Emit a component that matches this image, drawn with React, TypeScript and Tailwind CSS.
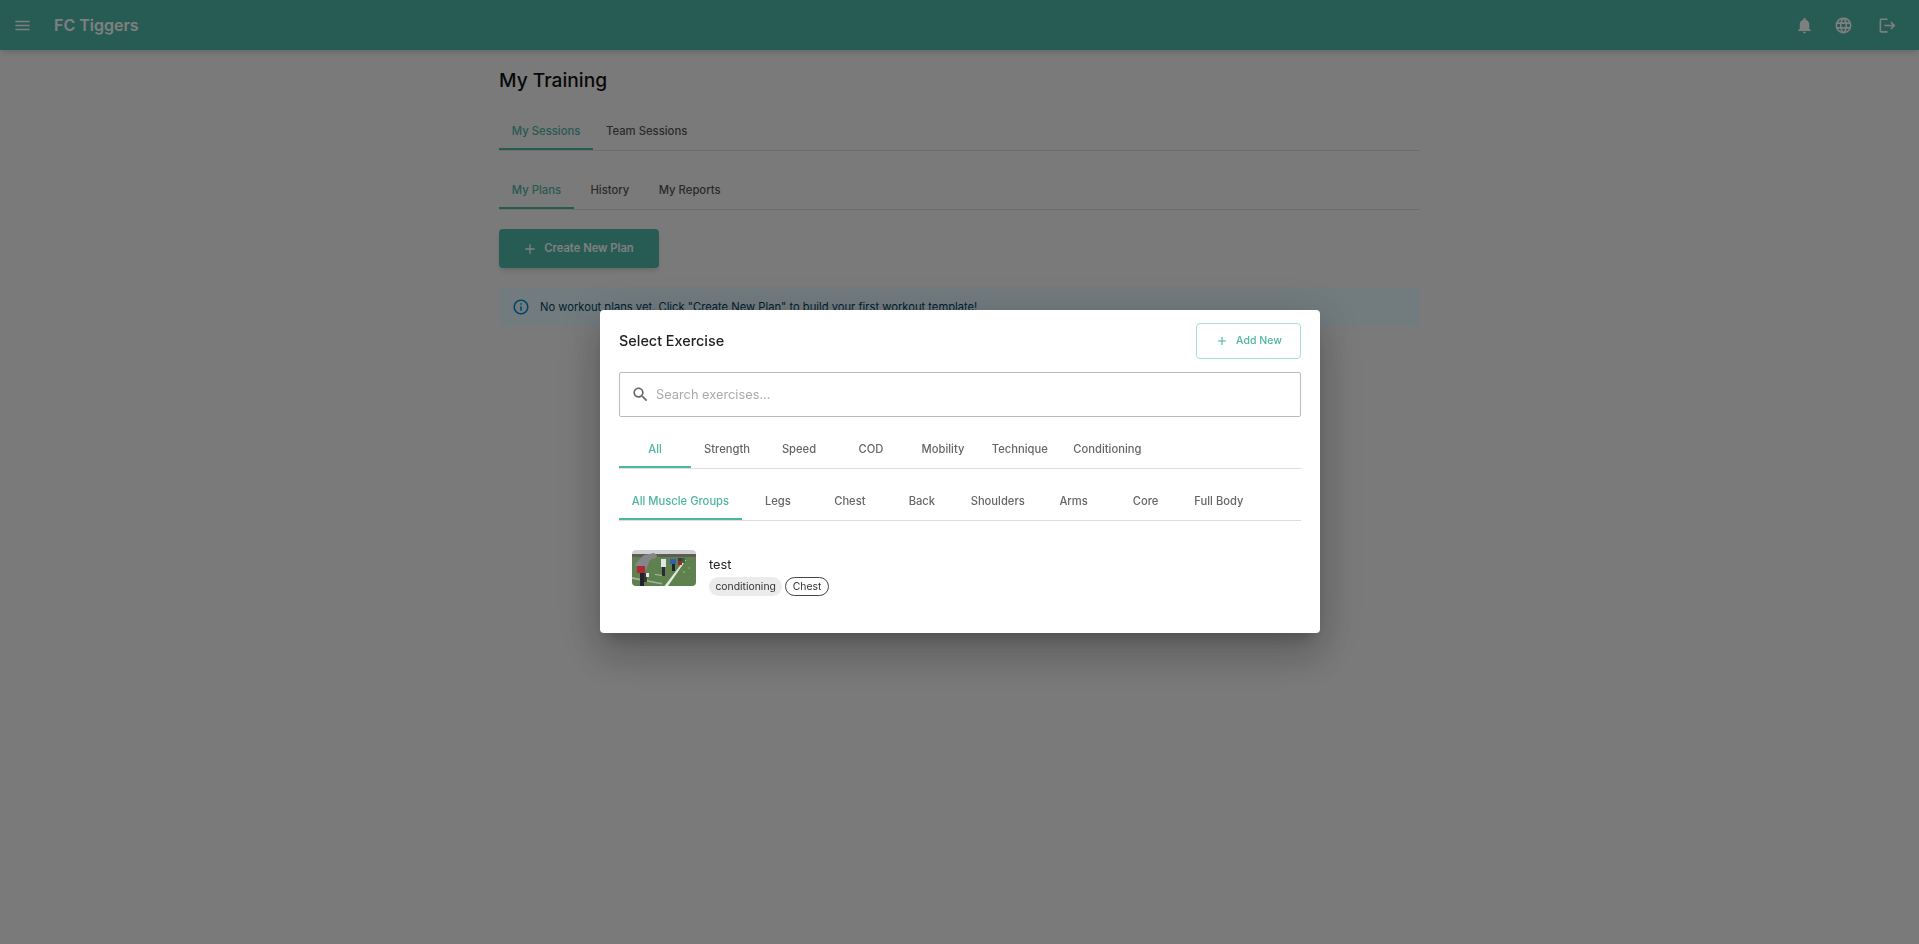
const P = {
  menu: "M3 18h18v-2H3v2zm0-5h18v-2H3v2zm0-7v2h18V6H3z",
  bell: "M12 22c1.1 0 2-.9 2-2h-4c0 1.1.89 2 2 2zm6-6v-5c0-3.07-1.64-5.64-4.5-6.32V4c0-.83-.67-1.5-1.5-1.5s-1.5.67-1.5 1.5v.68C7.63 5.36 6 7.92 6 11v5l-2 2v1h16v-1l-2-2z",
  globe:
    "M11.99 2C6.47 2 2 6.48 2 12s4.47 10 9.99 10C17.52 22 22 17.52 22 12S17.52 2 11.99 2zm6.93 6h-2.95c-.32-1.25-.78-2.45-1.38-3.56 1.84.63 3.37 1.91 4.33 3.56zM12 4.04c.83 1.2 1.48 2.53 1.91 3.96h-3.82c.43-1.43 1.08-2.76 1.91-3.96zM4.26 14C4.1 13.36 4 12.69 4 12s.1-1.36.26-2h3.38c-.08.66-.14 1.32-.14 2 0 .68.06 1.34.14 2H4.26zm.82 2h2.95c.32 1.25.78 2.45 1.38 3.56-1.84-.63-3.37-1.9-4.33-3.56zm2.95-8H5.08c.96-1.66 2.49-2.93 4.33-3.56C8.81 5.55 8.35 6.75 8.03 8zM12 19.96c-.83-1.2-1.48-2.53-1.91-3.96h3.82c-.43 1.43-1.08 2.76-1.91 3.96zM14.34 14H9.66c-.09-.66-.16-1.32-.16-2 0-.68.07-1.35.16-2h4.68c.09.65.16 1.32.16 2 0 .68-.07 1.34-.16 2zm.25 5.56c.6-1.11 1.06-2.31 1.38-3.56h2.95c-.96 1.65-2.49 2.93-4.33 3.56zM16.36 14c.08-.66.14-1.32.14-2 0-.68-.06-1.34-.14-2h3.38c.16.64.26 1.31.26 2s-.1 1.36-.26 2h-3.38z",
  logout:
    "M17 7l-1.41 1.41L18.17 11H8v2h10.17l-2.58 2.58L17 17l5-5zM4 5h8V3H4c-1.1 0-2 .9-2 2v14c0 1.1.9 2 2 2h8v-2H4V5z",
  search:
    "M15.5 14h-.79l-.28-.27C15.41 12.59 16 11.11 16 9.5 16 5.91 13.09 3 9.5 3S3 5.91 3 9.5 5.91 16 9.5 16c1.61 0 3.09-.59 4.23-1.57l.27.28v.79l5 4.99L20.49 19l-4.99-5zm-6 0C7.01 14 5 11.99 5 9.5S7.01 5 9.5 5 14 7.01 14 9.5 11.99 14 9.5 14z",
  add: "M19 13h-6v6h-2v-6H5v-2h6V5h2v6h6v2z",
  info: "M11 7h2v2h-2zm0 4h2v6h-2zm1-9C6.48 2 2 6.48 2 12s4.48 10 10 10 10-4.48 10-10S17.52 2 12 2zm0 18c-4.41 0-8-3.59-8-8s3.59-8 8-8 8 3.59 8 8-3.59 8-8 8z",
};

function Icon({ d, className }: { d: string; className: string }) {
  return (
    <svg viewBox="0 0 24 24" fill="currentColor" className={className}>
      <path d={d} />
    </svg>
  );
}

// small photo of players on a pitch
function Thumb() {
  return (
    <svg viewBox="0 0 64 36" className="w-16 h-9 rounded-[4px] shrink-0">
      <defs>
        <filter id="soft">
          <feGaussianBlur stdDeviation="0.5" />
        </filter>
      </defs>
      <g filter="url(#soft)">
        <rect x="-2" y="-2" width="68" height="40" fill="#5f8050" />
        <rect x="-2" y="-2" width="68" height="6" fill="#cfd2d5" />
        <rect x="-2" y="4" width="68" height="3" fill="#5f5c55" />
        <path d="M54 10 L36 36 L32.5 36 L52.5 10z" fill="#e6ebe0" />
        <path d="M0 27 L30 33 L30 34.5 L0 29z" fill="#cdd5c5" opacity=".6" />
        <path d="M23 24 L31 25 L31 26 L23 25z" fill="#d6dccd" opacity=".7" />
        <circle cx="15" cy="30" r=".8" fill="#c9b83a" />
        <circle cx="52" cy="22" r=".8" fill="#c9b83a" />
        <circle cx="57" cy="18" r=".7" fill="#c9b83a" />
        <path d="M3 14 L12 5 L22 3 L25 7 L18 10 L14 20 L6 19z" fill="#85868a" />
        <circle cx="22" cy="6" r="2.6" fill="#8b8478" />
        <rect x="5" y="16" width="8" height="7" fill="#ad2a30" />
        <rect x="8" y="23" width="4" height="13" fill="#24242a" />
        <rect x="12" y="23" width="3" height="9" fill="#35353a" />
        <rect x="14" y="23" width="3" height="4" fill="#e8e8e8" />
        <rect x="29" y="9" width="5" height="8" fill="#e2e5e8" />
        <rect x="30" y="17" width="3" height="9" fill="#2a2a30" />
        <rect x="38" y="9" width="6" height="5" fill="#2e62ad" />
        <rect x="40" y="14" width="3" height="7" fill="#22242a" />
        <rect x="46" y="8" width="4" height="3" fill="#3d3d3d" />
        <rect x="46" y="11" width="4" height="4" fill="#9c2b2b" />
        <rect x="50" y="8" width="3" height="5" fill="#2d6a3a" />
      </g>
    </svg>
  );
}

function Tab({ label, active }: { label: string; active?: boolean }) {
  return (
    <div
      className={`h-[38px] min-w-[72px] px-[12.8px] pt-[3px] flex items-center justify-center text-[11.2px] font-medium border-b-2 ${
        active ? "text-[#4db6a2] border-[#4db6a2]" : "text-[#666] border-transparent"
      }`}
    >
      {label}
    </div>
  );
}

function PageTab({ label, active }: { label: string; active?: boolean }) {
  return (
    <div
      className={`h-[38px] min-w-[72px] px-[12.8px] pt-[2px] flex items-center justify-center text-[11.3px] font-medium border-b-2 ${
        active ? "text-[#4db6a2] border-[#4db6a2]" : "text-[#555] border-transparent"
      }`}
    >
      {label}
    </div>
  );
}

export default function App() {
  return (
    <div className="min-h-[944px] bg-[#f5f5f5] font-['Inter',sans-serif]">
      <header className="h-[50px] bg-[#4fb8a8] text-white flex items-center pl-[13px] shadow-md">
        <Icon d={P.menu} className="w-[19px] h-[19px]" />
        <span className="ml-[22px] text-[16px] font-semibold">FC Tiggers</span>
        <div className="ml-auto flex items-center">
          <Icon d={P.bell} className="w-[19px] h-[19px] mr-[20px]" />
          <Icon d={P.globe} className="w-[19px] h-[19px] mr-[25px]" />
          <Icon d={P.logout} className="w-[19px] h-[19px] mr-[22px]" />
        </div>
      </header>

      <main className="w-[921px] mx-auto">
        <h1 className="mt-[18px] text-[19.2px] leading-[24px] font-medium text-[#111]">My Training</h1>
        <div className="mt-[20px] flex border-b border-[#ddd]">
          <PageTab label="My Sessions" active />
          <PageTab label="Team Sessions" />
        </div>
        <div className="mt-[20px] flex border-b border-[#ddd]">
          <PageTab label="My Plans" active />
          <PageTab label="History" />
          <PageTab label="My Reports" />
        </div>
        <button className="mt-[19px] h-[39px] w-[160px] rounded-[4px] bg-[#4fb8a8] text-white text-[11.2px] font-semibold flex items-center justify-center gap-[6px] pr-[2px] shadow-md">
          <Icon d={P.add} className="w-[16px] h-[16px]" />
          Create New Plan
        </button>
        <div className="mt-[19px] h-[39px] rounded-[4px] bg-[#e5f6fd] flex items-center px-[13px] text-[11.2px] text-[#014361]">
          <Icon d={P.info} className="w-[18px] h-[18px] text-[#0288d1] mr-[10px]" />
          <span className="pt-[2px]">No workout plans yet. Click "Create New Plan" to build your first workout template!</span>
        </div>
      </main>

      {/* dialog */}
      <div className="fixed inset-0 bg-black/50 pb-[1px] flex items-center justify-center">
        <div className="w-[720px] h-[323px] bg-white rounded-[4px] pl-[19.5px] pr-[18.5px] pt-[13px] shadow-[0_11px_15px_-7px_rgba(0,0,0,0.2),0_24px_38px_3px_rgba(0,0,0,0.14),0_9px_46px_8px_rgba(0,0,0,0.12)]">
          <div className="flex items-center justify-between">
            <h2 className="text-[14.4px] font-medium text-[#222]">Select Exercise</h2>
            <button className="w-[105px] h-[36px] rounded-[4px] border border-[#a6dfd2] text-[#4db6a2] text-[10.5px] font-medium flex items-center justify-center gap-[7px]">
              <Icon d={P.add} className="w-[14px] h-[14px]" />
              Add New
            </button>
          </div>
          <div className="mt-[13px] h-[45px] border border-[#bbb] rounded-[2px] flex items-center pl-[11px]">
            <Icon d={P.search} className="w-[19px] h-[19px] text-[#666]" />
            <span className="ml-[6px] text-[12.8px] text-[#aaa]">Search exercises...</span>
          </div>
          <div className="mt-[13px] flex border-b border-[#ddd]">
            {["All", "Strength", "Speed", "COD", "Mobility", "Technique", "Conditioning"].map((t, i) => (
              <Tab key={t} label={t} active={i === 0} />
            ))}
          </div>
          <div className="mt-[13px] flex border-b border-[#ddd]">
            {["All Muscle Groups", "Legs", "Chest", "Back", "Shoulders", "Arms", "Core", "Full Body"].map((t, i) => (
              <Tab key={t} label={t} active={i === 0} />
            ))}
          </div>
          <div className="mt-[29px] pl-[13px] flex gap-[13px]">
            <Thumb />
            <div className="pt-[6px]">
              <div className="text-[12.8px] leading-[18px] text-[#222]">test</div>
              <div className="mt-[3px] flex gap-[3px]">
                <span className="h-[19px] px-[6.4px] rounded-full bg-[#ebebeb] text-[#333] text-[10.4px] flex items-center">conditioning</span>
                <span className="h-[19px] px-[6.4px] rounded-full border border-[#444] text-[#333] text-[10.4px] flex items-center">Chest</span>
              </div>
            </div>
          </div>
        </div>
      </div>
    </div>
  );
}
